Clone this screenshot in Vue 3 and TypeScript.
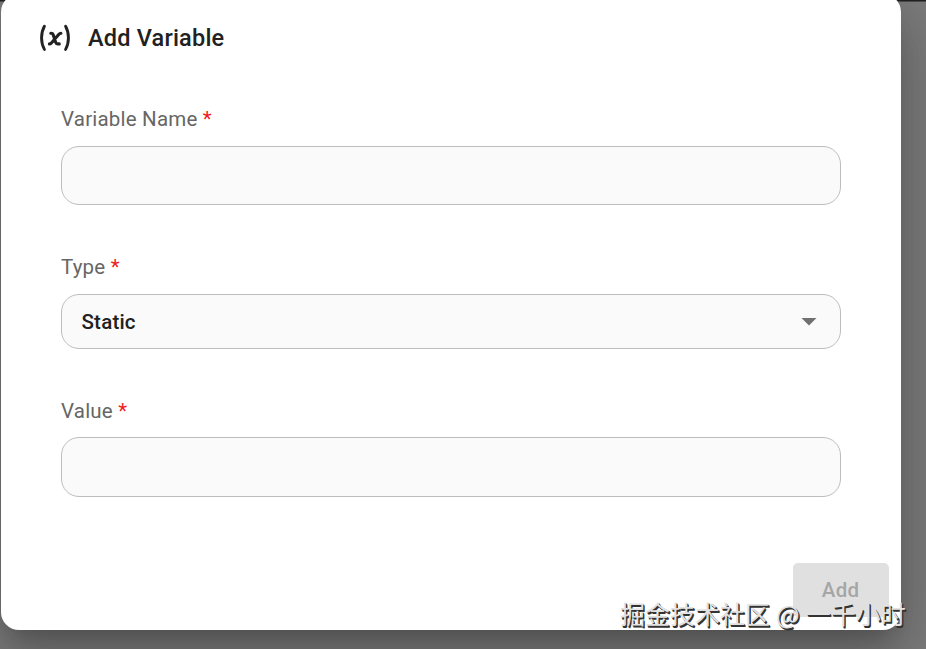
<script setup lang="ts">
import { computed, ref } from 'vue';

type VariableType = 'Static' | 'Dynamic';

const name = ref('');
const type = ref<VariableType>('Static');
const value = ref('');

const canSubmit = computed(() => name.value.trim() !== '' && value.value.trim() !== '');

const toggleType = () => {
  type.value = type.value === 'Static' ? 'Dynamic' : 'Static';
};
</script>

<template>
  <div class="backdrop">
    <form class="dialog" @submit.prevent>
      <header class="dialog-header">
        <svg class="variable-icon" viewBox="0 0 32 28" width="32" height="28">
          <path d="M5.4 2.2C1.6 9 1.6 18.6 5.4 25.4M26.6 2.2c3.8 6.8 3.8 16.4 0 23.2" />
          <path class="x" d="M11.8 9.2h.5c1 0 1.5.5 1.8 1.4l2.6 7.8c.3 1 .9 1.5 1.8 1.5h1.8M21.9 9.2c-.9 0-1.4.3-2 1l-7.5 8.7c-.6.7-1.2 1-2 1" />
        </svg>
        <h1 class="dialog-title">Add Variable</h1>
      </header>

      <div class="fields">
        <label class="label" for="name">Variable Name <span class="required">*</span></label>
        <input id="name" v-model="name" class="control name" type="text" autocomplete="off">

        <label class="label" for="type">Type <span class="required">*</span></label>
        <button id="type" class="control select" type="button" @click="toggleType">
          <span>{{ type }}</span>
          <svg class="arrow" viewBox="0 0 16 8" width="16" height="8">
            <path d="M0.5 0h15L8 7.6z" />
          </svg>
        </button>

        <label class="label" for="value">Value <span class="required">*</span></label>
        <input id="value" v-model="value" class="control value" type="text" autocomplete="off">
      </div>

      <footer class="dialog-actions">
        <button class="add" type="submit" :disabled="!canSubmit">Add</button>
      </footer>
    </form>
    <div class="watermark">掘金技术社区 @ 一千小时</div>
  </div>
</template>

<style>
body {
  margin: 0;
  overflow: hidden;
}
</style>

<style scoped>
.backdrop {
  position: relative;
  width: 100vw;
  height: 100vh;
  overflow: hidden;
  box-sizing: border-box;
  padding-left: 1px;
  display: flex;
  align-items: flex-start;
  background: linear-gradient(#222 0, #222 1px, #4c4c4c 1px, #4c4c4c 2px, #7c7c7c 2px);
  font-family: Roboto, 'Noto Sans CJK SC', sans-serif;
}

.dialog {
  width: 900px;
  height: 636px;
  margin-top: -6px;
  box-sizing: border-box;
  display: flex;
  flex-direction: column;
  background: #fff;
  border-radius: 18px;
  box-shadow: 0 16px 22px -10px rgba(0, 0, 0, 0.2), 0 35px 56px 4px rgba(0, 0, 0, 0.14), 0 13px 68px 12px rgba(0, 0, 0, 0.12);
}

.dialog-header {
  display: flex;
  align-items: center;
  gap: 17px;
  height: 28px;
  padding: 30px 38px 0;
}

.variable-icon {
  fill: none;
  stroke: #222;
  stroke-width: 2.9;
  stroke-linecap: round;
  stroke-linejoin: round;
}

.variable-icon .x {
  stroke-width: 3.1;
}

.dialog-title {
  margin: 0;
  color: #212121;
  font-size: 23.5px;
  font-weight: 500;
  line-height: 28px;
  letter-spacing: 0.2px;
}

.fields {
  display: flex;
  flex-direction: column;
  padding: 54px 60px 0;
}

.label {
  height: 26px;
  color: #666;
  font-size: 20.5px;
  line-height: 26px;
  letter-spacing: 0.2px;
}

.required {
  color: #f01b1b;
}

.control {
  width: 100%;
  box-sizing: border-box;
  border: 1px solid #bdbdbd;
  border-radius: 18px;
  background: #fafafa;
  padding: 0 20px;
  color: #212121;
  font: 500 20.5px Roboto, sans-serif;
  outline: none;
}

.name {
  height: 59px;
  margin: 14px 0 49px;
}

.select {
  height: 55px;
  margin: 14px 0 49px;
  display: flex;
  align-items: center;
  justify-content: space-between;
  padding: 0 23px 0 19.5px;
  letter-spacing: 0.2px;
}

.value {
  height: 60px;
  margin-top: 13px;
}

.arrow {
  fill: #707070;
}

.dialog-actions {
  display: flex;
  justify-content: flex-end;
  padding: 66px 12px 0;
}

.add {
  width: 96px;
  height: 54px;
  padding: 0 7px 0 6px;
  border: 0;
  border-radius: 5px;
  background: #1976d2;
  color: #fff;
  font: 500 20.5px Roboto, sans-serif;
  letter-spacing: 0.2px;
}

.add:disabled {
  background: #e0e0e0;
  color: #a6a6a6;
}

.watermark {
  position: absolute;
  left: 620px;
  top: 595px;
  color: #e2e2e2;
  font-family: 'Noto Sans CJK SC', sans-serif;
  font-size: 25px;
  line-height: 36px;
  white-space: nowrap;
  word-spacing: 0.5px;
  text-shadow: 1px 1px 0.5px #333, 1.5px 1.5px 0.5px #333;
}
</style>
